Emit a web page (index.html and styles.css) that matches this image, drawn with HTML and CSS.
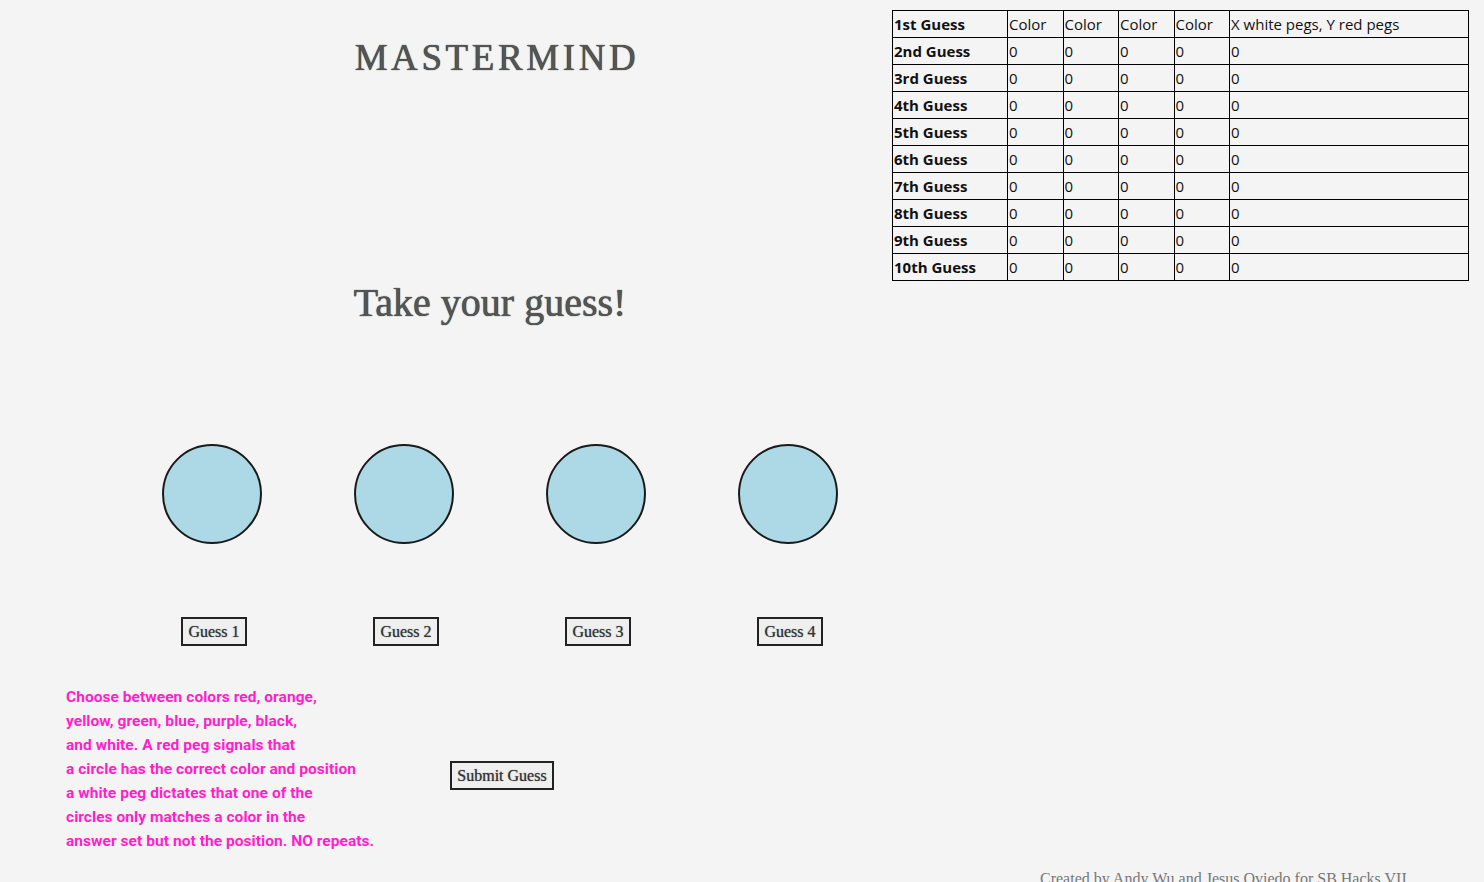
FILE: index.html
```html
<!DOCTYPE html>
<html>
<head>
<meta charset="utf-8">
<title>Mastermind</title>
<link rel="stylesheet" href="styles.css">
</head>
<body>
<div class="page">
  <div class="left">
    <h1 class="title">MASTERMIND</h1>
    <h2 class="prompt">Take your guess!</h2>
    <div class="pegs">
      <div class="slot"><div class="circle"></div><button class="gbtn">Guess 1</button></div>
      <div class="slot"><div class="circle"></div><button class="gbtn">Guess 2</button></div>
      <div class="slot"><div class="circle"></div><button class="gbtn">Guess 3</button></div>
      <div class="slot"><div class="circle"></div><button class="gbtn">Guess 4</button></div>
    </div>
    <div class="lower">
      <p class="rules">Choose between colors red, orange,<br>yellow, green, blue, purple, black,<br>and white. A red peg signals that<br>a circle has the correct color and position<br>a white peg dictates that one of the<br>circles only matches a color in the<br>answer set but not the position. NO repeats.</p>
      <button class="submit">Submit Guess</button>
    </div>
  </div>
  <table class="board">
    <colgroup>
      <col class="c1"><col class="cc"><col class="cc"><col class="cc"><col class="cc"><col class="cl">
    </colgroup>
    <tr><th>1st Guess</th><td>Color</td><td>Color</td><td>Color</td><td>Color</td><td>X white pegs, Y red pegs</td></tr>
    <tr><th>2nd Guess</th><td>0</td><td>0</td><td>0</td><td>0</td><td>0</td></tr>
    <tr><th>3rd Guess</th><td>0</td><td>0</td><td>0</td><td>0</td><td>0</td></tr>
    <tr><th>4th Guess</th><td>0</td><td>0</td><td>0</td><td>0</td><td>0</td></tr>
    <tr><th>5th Guess</th><td>0</td><td>0</td><td>0</td><td>0</td><td>0</td></tr>
    <tr><th>6th Guess</th><td>0</td><td>0</td><td>0</td><td>0</td><td>0</td></tr>
    <tr><th>7th Guess</th><td>0</td><td>0</td><td>0</td><td>0</td><td>0</td></tr>
    <tr><th>8th Guess</th><td>0</td><td>0</td><td>0</td><td>0</td><td>0</td></tr>
    <tr><th>9th Guess</th><td>0</td><td>0</td><td>0</td><td>0</td><td>0</td></tr>
    <tr><th>10th Guess</th><td>0</td><td>0</td><td>0</td><td>0</td><td>0</td></tr>
  </table>
</div>
<footer class="credit">Created by Andy Wu and Jesus Oviedo for SB Hacks VII</footer>
</body>
</html>
```
FILE: styles.css
```css
html, body {
  background: #f4f4f4;
}
body {
  margin: 8px;
  font-family: "Liberation Serif", serif;
  overflow: hidden;
}
.page {
  display: flex;
  align-items: flex-start;
}
.left {
  flex: 0 0 884px;
}
.title {
  margin: 28px 0 0;
  padding-left: 94px;
  text-align: center;
  font-family: "Liberation Serif", serif;
  font-weight: normal;
  font-size: 37px;
  line-height: 44px;
  letter-spacing: 3.6px;
  color: #555;
  text-shadow: 0 0 1px #000;
}
.prompt {
  margin: 200px 0 0;
  padding-left: 80px;
  text-align: center;
  font-family: "Liberation Serif", serif;
  font-weight: normal;
  font-size: 40px;
  line-height: 46px;
  color: #555;
  text-shadow: 0 0 1px #000;
}
.pegs {
  display: grid;
  grid-template-columns: repeat(4, 192px);
  margin: 118px 0 0 108px;
}
.slot {
  display: flex;
  flex-direction: column;
  align-items: center;
}
.circle {
  width: 96px;
  height: 96px;
  border: 2px solid #1a1a1a;
  border-radius: 50%;
  background: #add8e6;
}
.gbtn, .submit {
  font-family: "Liberation Serif", serif;
  font-size: 16px;
  color: #333;
  background: #efefef;
  border: 2px solid #222;
  border-radius: 0;
  height: 29px;
  padding: 0;
  white-space: nowrap;
  text-shadow: 0 0 1px #666;
}
.gbtn {
  margin: 73px 0 0 4px;
  width: 66px;
}
.lower {
  display: flex;
  align-items: flex-start;
  margin-top: 39px;
}
.rules {
  margin: 0 0 0 58px;
  width: 326px;
  flex: 0 0 326px;
  font-family: "Roboto", "Liberation Sans", sans-serif;
  font-weight: 700;
  font-size: 15.5px;
  letter-spacing: 0.05px;
  line-height: 24px;
  color: #ff1fcc;
  white-space: nowrap;
}
.submit {
  margin: 76px 0 0 58px;
  width: 104px;
}
.board {
  margin-top: 2px;
  border-collapse: collapse;
  table-layout: fixed;
  width: 576px;
  font-family: "Open Sans", sans-serif;
  font-size: 15px;
  color: #111;
}
.c1 { width: 115px; }
.cc { width: 55.5px; }
.cl { width: 239px; }
.board th, .board td {
  border: 1px solid #000;
  height: 26px;
  padding: 0 1px;
  text-align: left;
  white-space: nowrap;
  overflow: hidden;
}
.board th {
  font-weight: 700;
}
.credit {
  margin-top: 17px;
  padding-left: 1032px;
  font-size: 16px;
  color: #777;
  white-space: nowrap;
}
```
